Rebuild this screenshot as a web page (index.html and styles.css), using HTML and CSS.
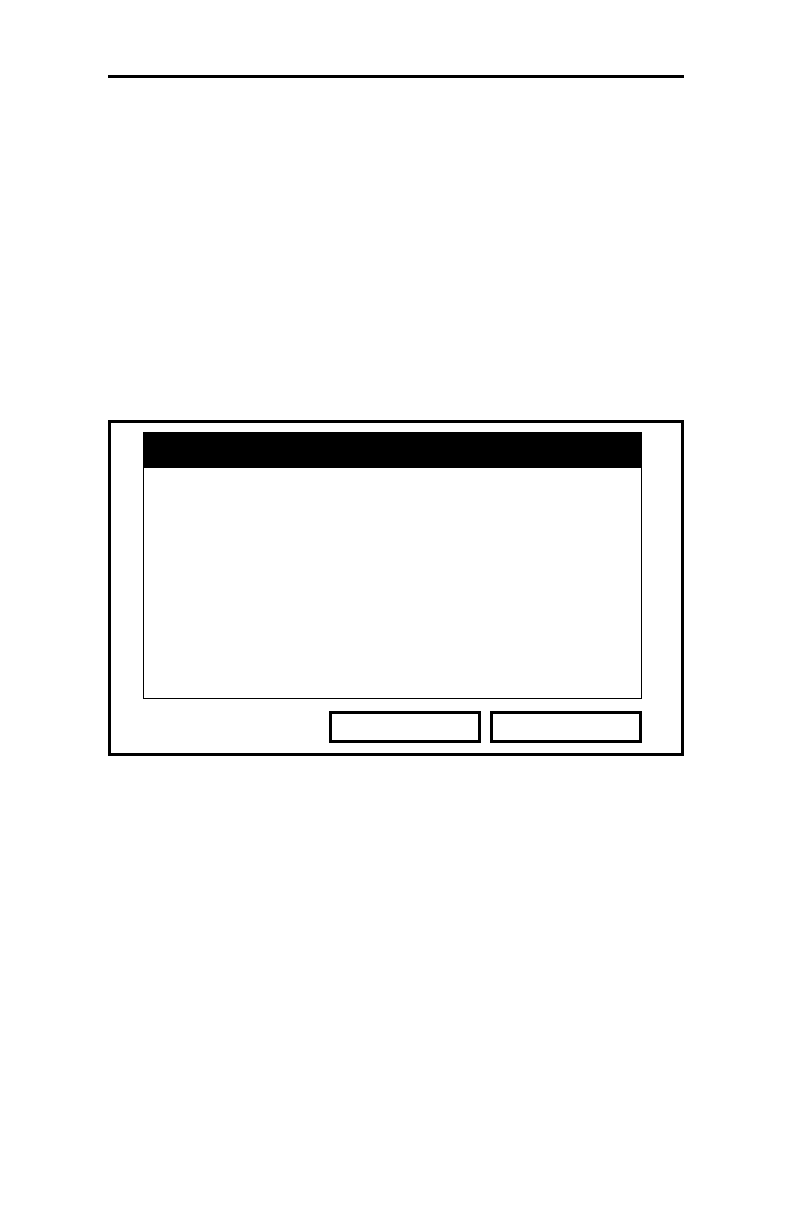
FILE: index.html
```html
<!DOCTYPE html>
<html>
<head>
<meta charset="utf-8">
<link rel="stylesheet" href="styles.css">
</head>
<body>
<div class="page">
  <div class="rule"></div>
  <div class="panel">
    <div class="screen">
      <div class="title-bar"></div>
    </div>
    <div class="buttons">
      <div class="btn"></div>
      <div class="btn"></div>
    </div>
  </div>
</div>
</body>
</html>
```
FILE: styles.css
```css
html, body {
  margin: 0;
  padding: 0;
  background: #ffffff;
  font-family: "Liberation Sans", Arial, sans-serif;
}
.page {
  padding-top: 75px;
  padding-left: 108px;
}
.rule {
  width: 576px;
  height: 3px;
  background: #000;
}
.panel {
  box-sizing: border-box;
  margin-top: 342px;
  width: 576px;
  height: 336px;
  border: 3px solid #000;
  padding: 9px 39px 10px 32px;
  display: flex;
  flex-direction: column;
}
.screen {
  box-sizing: border-box;
  width: 499px;
  height: 267px;
  border: 1px solid #000;
}
.title-bar {
  height: 36px;
  background: #000;
  margin-top: -1px;
  margin-right: -1px;
}
.buttons {
  margin-top: 12px;
  display: flex;
  justify-content: flex-end;
  gap: 9px;
}
.btn {
  box-sizing: border-box;
  width: 152px;
  height: 32px;
  border: 3px solid #000;
}
```
